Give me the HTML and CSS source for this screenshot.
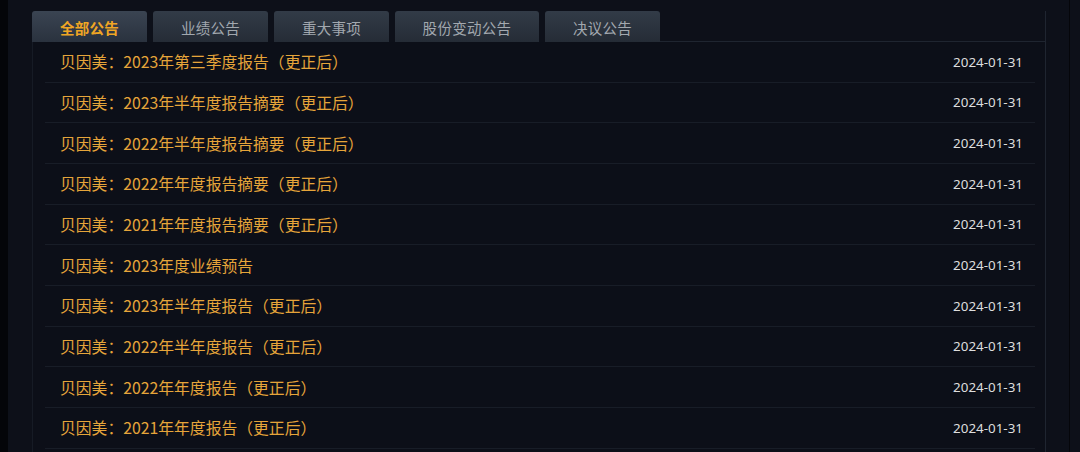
FILE: index.html
```html
<!DOCTYPE html>
<html lang="zh-CN">
<head>
<meta charset="utf-8">
<link rel="stylesheet" href="styles.css">
</head>
<body>
<div class="page">
  <div class="main">
    <div class="tabs">
      <div class="tab active">全部公告</div>
      <div class="tab">业绩公告</div>
      <div class="tab">重大事项</div>
      <div class="tab wide">股份变动公告</div>
      <div class="tab">决议公告</div>
      <div class="tab-rest"></div>
    </div>
    <div class="panel">
      <ul class="list">
        <li class="row"><span class="title">贝因美：2023年第三季度报告（更正后）</span><span class="date">2024-01-31</span></li>
        <li class="row"><span class="title">贝因美：2023年半年度报告摘要（更正后）</span><span class="date">2024-01-31</span></li>
        <li class="row"><span class="title">贝因美：2022年半年度报告摘要（更正后）</span><span class="date">2024-01-31</span></li>
        <li class="row"><span class="title">贝因美：2022年年度报告摘要（更正后）</span><span class="date">2024-01-31</span></li>
        <li class="row"><span class="title">贝因美：2021年年度报告摘要（更正后）</span><span class="date">2024-01-31</span></li>
        <li class="row"><span class="title">贝因美：2023年度业绩预告</span><span class="date">2024-01-31</span></li>
        <li class="row"><span class="title">贝因美：2023年半年度报告（更正后）</span><span class="date">2024-01-31</span></li>
        <li class="row"><span class="title">贝因美：2022年半年度报告（更正后）</span><span class="date">2024-01-31</span></li>
        <li class="row"><span class="title">贝因美：2022年年度报告（更正后）</span><span class="date">2024-01-31</span></li>
        <li class="row"><span class="title">贝因美：2021年年度报告（更正后）</span><span class="date">2024-01-31</span></li>
      </ul>
    </div>
  </div>
  <div class="right-strip"></div>
</div>
</body>
</html>
```

FILE: styles.css
```css
* { box-sizing: border-box; }
html, body {
  margin: 0;
  padding: 0;
  background: #0d1019;
  height: 452px;
  overflow: hidden;
  font-family: "Noto Sans", "Noto Sans CJK SC", sans-serif;
}
.page {
  display: flex;
  height: 452px;
  border-left: 8px solid #040509;
  background: #0d1019;
}
.main {
  padding: 11px 0 0 24px;
  width: 1038px;
}
.tabs {
  display: flex;
  gap: 6px;
  height: 31px;
  align-items: stretch;
}
.tab {
  width: 115px;
  background: linear-gradient(#323b47, #252c36);
  border-radius: 3px 3px 0 0;
  color: #a2a8af;
  font-size: 14.5px;
  display: flex;
  align-items: center;
  justify-content: center;
  letter-spacing: 0.3px;
  padding-top: 1px;
  font-family: "Noto Sans CJK SC", sans-serif;
}
.tab.wide { width: 144px; }
.tab.active {
  background: linear-gradient(#3a4452, #2a323e);
  color: #f0a624;
  font-weight: 700;
}
.tab-rest {
  flex: 1;
  border-bottom: 1px solid #1f2530;
  border-right: 1px solid #1f2530;
  margin-left: -6px;
}
.panel {
  width: 1014px;
  height: 420px;
  border-left: 1px solid #161b25;
  border-right: 1px solid #1f2530;
  background: #0c0f18;
  padding: 0 10px 0 12px;
}
.list {
  list-style: none;
  margin: 0;
  padding: 0;
}
.row {
  height: 40.67px;
  display: flex;
  align-items: center;
  justify-content: space-between;
  padding: 0 12px 0 15px;
  border-bottom: 1px solid #181d27;
}
.title {
  color: #e6a53a;
  font-size: 15.8px;
  font-family: "Noto Sans CJK SC", sans-serif;
  font-weight: 400;
}
.date {
  color: #dedede;
  font-size: 13.4px;
  font-family: "Noto Sans", "Open Sans", sans-serif;
}
.right-strip {
  width: 24px;
  border-right: 1px solid #05060a;
}
```
